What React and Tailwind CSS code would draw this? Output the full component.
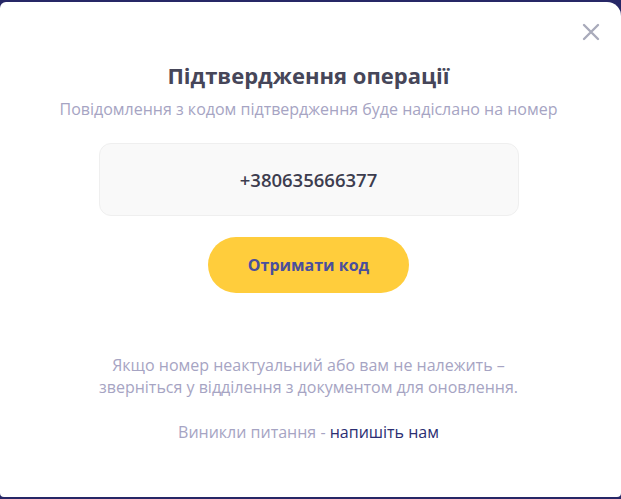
import React from "react";

export default function App() {
  return (
    <div className="w-[621px] h-[499px] bg-[#262766] pt-[2px] pb-[2px]" style={{ fontFamily: '"Open Sans", sans-serif' }}>
      <div className="relative h-[495px] pr-[4px] bg-white rounded-tl-[6px] rounded-tr-[14px] rounded-bl-[4px] rounded-br-[4px] flex flex-col items-center">
        <button className="absolute right-[21px] top-[21px] w-[18px] h-[18px] text-[#a9abbb]">
          <svg viewBox="0 0 18 18" width="18" height="18" fill="none" stroke="currentColor" strokeWidth="2.4" strokeLinecap="round">
            <path d="M2 2L16 16M16 2L2 16" />
          </svg>
        </button>
        <h1 className="mt-[58px] text-[22px] leading-[30px] font-bold text-[#464659]">Підтвердження операції</h1>
        <p className="mt-[7px] text-[16px] leading-[24px] text-[#a6a4c3]">Повідомлення з кодом підтвердження буде надіслано на номер</p>
        <div className="mt-[22px] w-[420px] h-[73px] bg-[#f9f9f9] border border-[#efefef] rounded-[12px] flex items-center justify-center">
          <span className="text-[18.5px] font-semibold text-[#3d3d4f]">+380635666377</span>
        </div>
        <button className="mt-[21px] w-[201px] h-[56px] rounded-full bg-[#ffcd3c] text-[16px] font-bold text-[#4a4f9c]">Отримати код</button>
        <p className="mt-[61px] text-[16px] leading-[22px] text-[#a6a4c3] text-center">
          Якщо номер неактуальний або вам не належить –<br />звернiться у відділення з документом для оновлення.
        </p>
        <p className="mt-[23px] text-[16px] leading-[22px] text-[#a6a4c3]">
          Виникли питання - <span className="text-[#2c2e72]">напишіть нам</span>
        </p>
      </div>
    </div>
  );
}
